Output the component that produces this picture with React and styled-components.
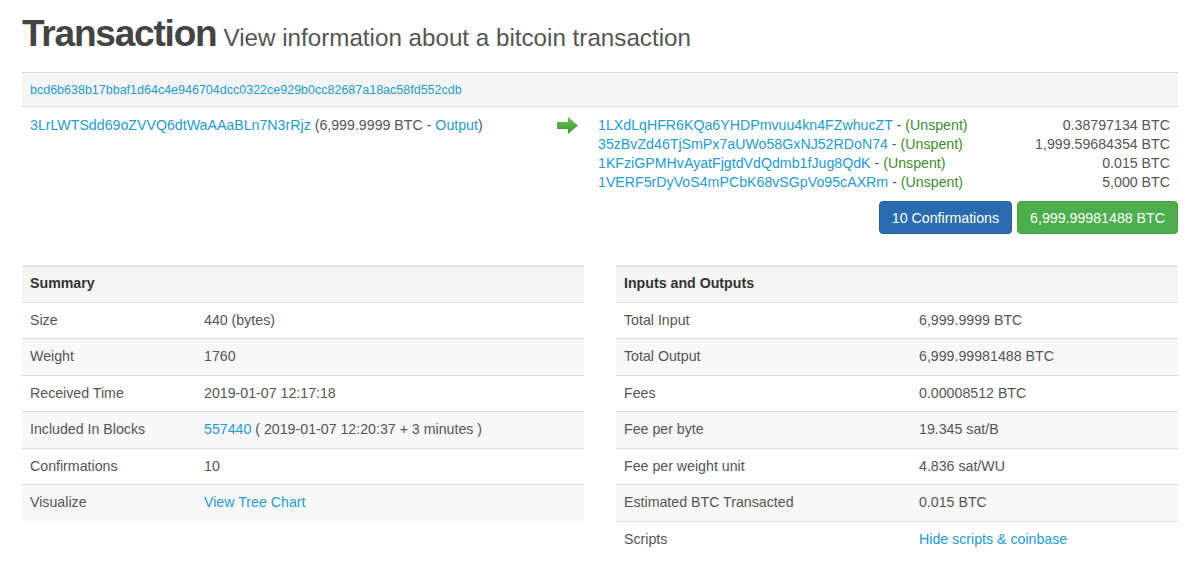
import React from "react";
import styled, { createGlobalStyle } from "styled-components";

const GlobalStyle = createGlobalStyle`
	body {
		margin: 0;
		background: #fff;
		font-family: "Liberation Sans", Arial, sans-serif;
		color: #555;
	}
`;

const Page = styled.div`
	padding: 0 22px;
	width: 1156px;
`;

const Heading = styled.h1`
	margin: 0;
	padding-top: 10px;
	height: 72px;
	box-sizing: border-box;
	display: flex;
	align-items: baseline;
	gap: 7px;
	font-weight: normal;
	color: #555;
	line-height: 48px;
`;

const Title = styled.span`
	font-size: 37px;
	font-weight: bold;
	letter-spacing: -1.2px;
	color: #444;
`;

const Subtitle = styled.span`
	font-size: 24.2px;
	color: #555;
`;

const Link = styled.a`
	color: #1f9bcf;
	text-decoration: none;
`;

const TxBox = styled.div`
	border-top: 1px solid #ddd;
`;

const HashRow = styled.div`
	background: #f5f5f5;
	padding: 0 8px;
	height: 33px;
	display: flex;
	align-items: center;
	font-size: 12.5px;
	border-bottom: 1px solid #ddd;
`;

const TxBody = styled.div`
	display: flex;
	padding: 9px 8px 0 8px;
	font-size: 14.2px;
	line-height: 19px;
`;

const InputCol = styled.div`
	width: 519px;
`;

const ArrowCol = styled.div`
	width: 49px;
	display: flex;
	padding-left: 8px;
	box-sizing: border-box;
	padding-top: 1px;
`;

const OutputCol = styled.div`
	flex: 1;
	display: flex;
	flex-direction: column;
`;

const OutputLine = styled.div`
	display: flex;
	justify-content: space-between;
`;

const Unspent = styled.span`
	color: #3d8b2f;
`;

const Buttons = styled.div`
	display: flex;
	justify-content: flex-end;
	gap: 5px;
	margin-top: 9px;
`;

const Badge = styled.span`
	display: inline-flex;
	align-items: center;
	justify-content: center;
	height: 33px;
	padding: 0 ${(p) => p.$pad}px;
	border-radius: 4px;
	color: #fff;
	font-size: 14.2px;
	background: ${(p) => p.$bg};
	border: 1px solid ${(p) => p.$border};
	box-sizing: border-box;
`;

const Tables = styled.div`
	display: grid;
	grid-template-columns: 1fr 1fr;
	align-items: start;
	gap: 32px;
	margin-top: 31px;
`;

const Table = styled.table`
	width: 100%;
	border-collapse: collapse;
	font-size: 14.2px;
	color: #555;

	tr:nth-child(odd) td {
		background: #f8f8f8;
	}
	td {
		padding: 8px 8px;
		line-height: 19.5px;
		border-top: 1px solid #ddd;
		text-align: left;
		vertical-align: top;
	}
`;

const HeadCell = styled.td`
	font-weight: bold;
	color: #333;
	background: #f5f5f5 !important;
	border-top: 2px solid #e4e4e4 !important;
	padding-top: 7px !important;
`;

const LabelCell = styled.td`
	width: ${(p) => p.$w}px;
`;

const Arrow = () => (
	<svg width="21" height="17" viewBox="0 0 21 17">
		<defs>
			<linearGradient id="ag" x1="0" y1="0" x2="0" y2="1">
				<stop offset="0" stopColor="#6cc259" />
				<stop offset="1" stopColor="#3c962f" />
			</linearGradient>
		</defs>
		<path d="M0 5 H11 V0 L21 8.5 L11 17 V12 H0 Z" fill="url(#ag)" />
	</svg>
);

const outputs = [
	["1LXdLqHFR6KQa6YHDPmvuu4kn4FZwhucZT", "0.38797134 BTC"],
	["35zBvZd46TjSmPx7aUWo58GxNJ52RDoN74", "1,999.59684354 BTC"],
	["1KFziGPMHvAyatFjgtdVdQdmb1fJug8QdK", "0.015 BTC"],
	["1VERF5rDyVoS4mPCbK68vSGpVo95cAXRm", "5,000 BTC"],
];

const summary = [
	["Size", "440 (bytes)"],
	["Weight", "1760"],
	["Received Time", "2019-01-07 12:17:18"],
	[
		"Included In Blocks",
		<>
			<Link href="#">557440</Link> ( 2019-01-07 12:20:37 + 3 minutes )
		</>,
	],
	["Confirmations", "10"],
	["Visualize", <Link href="#">View Tree Chart</Link>],
];

const io = [
	["Total Input", "6,999.9999 BTC"],
	["Total Output", "6,999.99981488 BTC"],
	["Fees", "0.00008512 BTC"],
	["Fee per byte", "19.345 sat/B"],
	["Fee per weight unit", "4.836 sat/WU"],
	["Estimated BTC Transacted", "0.015 BTC"],
	["Scripts", <Link href="#">Hide scripts &amp; coinbase</Link>],
];

const InfoTable = ({ title, rows, labelWidth }) => (
	<Table>
		<tbody>
			<tr>
				<HeadCell colSpan={2}>{title}</HeadCell>
			</tr>
			{rows.map(([label, value], i) => (
				<tr key={i}>
					<LabelCell $w={labelWidth}>{label}</LabelCell>
					<td>{value}</td>
				</tr>
			))}
		</tbody>
	</Table>
);

export default function App() {
	return (
		<Page>
			<GlobalStyle />
			<Heading>
				<Title>Transaction</Title>
				<Subtitle>View information about a bitcoin transaction</Subtitle>
			</Heading>

			<TxBox>
				<HashRow>
					<Link href="#">bcd6b638b17bbaf1d64c4e946704dcc0322ce929b0cc82687a18ac58fd552cdb</Link>
				</HashRow>
				<TxBody>
					<InputCol>
						<Link href="#">3LrLWTSdd69oZVVQ6dtWaAAaBLn7N3rRjz</Link> (6,999.9999 BTC - <Link href="#">Output</Link>)
					</InputCol>
					<ArrowCol>
						<Arrow />
					</ArrowCol>
					<OutputCol>
						{outputs.map(([addr, amt]) => (
							<OutputLine key={addr}>
								<span>
									<Link href="#">{addr}</Link> - <Unspent>(Unspent)</Unspent>
								</span>
								<span>{amt}</span>
							</OutputLine>
						))}
					</OutputCol>
				</TxBody>
				<Buttons>
					<Badge $bg="#2b6cb0" $border="#245d99" $pad={12}>10 Confirmations</Badge>
					<Badge $bg="#4cae4c" $border="#449d44" $pad={12}>6,999.99981488 BTC</Badge>
				</Buttons>
			</TxBox>

			<Tables>
				<InfoTable title="Summary" rows={summary} labelWidth={158} />
				<InfoTable title="Inputs and Outputs" rows={io} labelWidth={279} />
			</Tables>
		</Page>
	);
}
